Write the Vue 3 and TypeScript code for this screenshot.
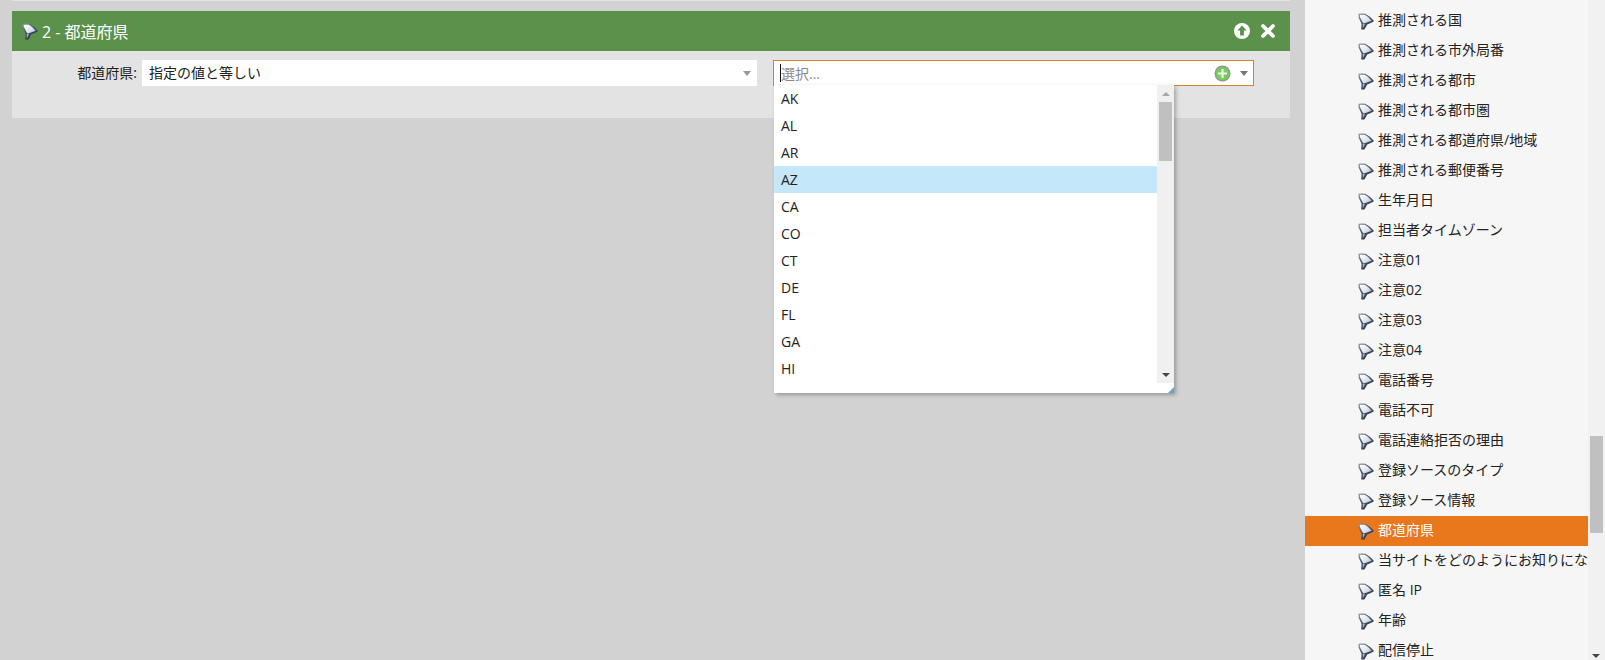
<script setup lang="ts">
const options: string[] = ['AK', 'AL', 'AR', 'AZ', 'CA', 'CO', 'CT', 'DE', 'FL', 'GA', 'HI']
const fields: string[] = [
  '推測される国', '推測される市外局番', '推測される都市', '推測される都市圏', '推測される都道府県/地域',
  '推測される郵便番号', '生年月日', '担当者タイムゾーン', '注意01', '注意02', '注意03', '注意04',
  '電話番号', '電話不可', '電話連絡拒否の理由', '登録ソースのタイプ', '登録ソース情報', '都道府県',
  '当サイトをどのようにお知りにな', '匿名 IP', '年齢', '配信停止'
]
</script>

<template>
  <div class="page">
    <svg width="0" height="0" class="defs">
      <defs>
        <linearGradient id="fg" x1="0" y1="0" x2="0.7" y2="1">
          <stop offset="0" stop-color="#8b96aa" />
          <stop offset="0.5" stop-color="#47536c" />
          <stop offset="1" stop-color="#252f42" />
        </linearGradient>
        <linearGradient id="fc" x1="0" y1="0" x2="1" y2="1">
          <stop offset="0" stop-color="#ffffff" />
          <stop offset="0.6" stop-color="#dfe3ea" />
          <stop offset="1" stop-color="#98a3b5" />
        </linearGradient>
        <symbol id="funnel" viewBox="0 0 16 17">
          <path d="M0.6 0.8 Q5 0 7.4 0.8 Q12 3.4 15.6 7.6 L15.6 8.6 Q12 10.6 9.2 11.6 L6.4 16.4 L3.2 16.6 L3.6 11 L0.6 4.6 Z" fill="url(#fg)" />
          <path d="M1.8 1.8 L6.8 1.8 Q10.8 4 13.8 7.8 L8.4 9.8 L5.4 10.4 L4.2 8.4 L1.8 3.8 Z" fill="url(#fc)" />
          <path d="M4.8 11 L7 11 L4.8 15.4 Z" fill="#aab3c2" />
        </symbol>
      </defs>
    </svg>
    <main class="canvas">
      <div class="prev-panel"></div>
      <section class="panel">
        <header class="panel-head">
          <div class="title">
            <svg class="funnel" width="16" height="17"><use href="#funnel" /></svg>
            <span>2 - 都道府県</span>
          </div>
          <div class="actions">
            <svg width="18" height="18" viewBox="0 0 18 18">
              <circle cx="9" cy="9" r="8" fill="#fff" />
              <path d="M9 3.6 L13.6 8.6 L10.9 8.6 L10.9 13.4 L7.1 13.4 L7.1 8.6 L4.4 8.6 Z" fill="#5c914c" />
            </svg>
            <svg width="16" height="16" viewBox="0 0 16 16">
              <path d="M3 3 L13 13 M13 3 L3 13" stroke="#fff" stroke-width="3.8" stroke-linecap="round" />
            </svg>
          </div>
        </header>
        <div class="panel-body">
          <label class="field-label">都道府県:</label>
          <div class="select">
            <span>指定の値と等しい</span>
            <i class="caret light"></i>
          </div>
          <div class="combo-wrap">
            <div class="combo">
              <span class="cursor"></span>
              <span class="placeholder">選択...</span>
              <svg class="plus" width="17" height="17" viewBox="0 0 17 17">
                <circle cx="8.5" cy="8.5" r="8" fill="#8d9a90" />
                <circle cx="8.5" cy="8.5" r="6.6" fill="#7ccb5e" />
                <path d="M8.5 4 V13 M4 8.5 H13" stroke="#e9fbe3" stroke-width="2.2" />
              </svg>
              <i class="caret"></i>
            </div>
            <div class="dropdown">
              <ul class="options">
                <li v-for="o in options" :key="o" :class="{ hover: o === 'AZ' }">{{ o }}</li>
              </ul>
              <div class="dd-scroll">
                <div class="arrow-btn"><i class="tri up"></i></div>
                <div class="dd-track"><div class="dd-thumb"></div></div>
                <div class="arrow-btn"><i class="tri down"></i></div>
              </div>
              <span class="resize"></span>
            </div>
          </div>
        </div>
      </section>
    </main>
    <aside class="sidebar">
      <ul class="tree">
        <li v-for="f in fields" :key="f" :class="{ active: f === '都道府県' }">
          <svg class="funnel" width="16" height="17"><use href="#funnel" /></svg>
          <span class="tree-text">{{ f }}</span>
        </li>
      </ul>
      <div class="side-scroll">
        <div class="side-thumb"></div>
        <i class="tri down side-arrow"></i>
      </div>
    </aside>
  </div>
</template>

<style>
html, body { margin: 0; padding: 0; overflow: hidden; background: #d2d2d2; }
</style>

<style scoped>
.page {
  display: flex;
  width: 1605px;
  height: 660px;
  overflow: hidden;
  background: #d2d2d2;
  font-family: "Open Sans", "Noto Sans CJK JP", sans-serif;
  font-size: 14px;
  color: #222;
}
.defs { position: absolute; }
.canvas { flex: 0 0 1305px; padding: 0 15px 0 12px; box-sizing: border-box; }
.prev-panel { height: 1px; margin-bottom: 10px; background: #e3e3e3; }
.panel { background: #e3e3e3; height: 107px; }
.panel-head {
  height: 40px;
  background: #5c914c;
  display: flex;
  align-items: center;
  justify-content: space-between;
  padding: 0 14px 0 10px;
  color: #fff;
  font-size: 16px;
}
.title { display: flex; align-items: center; gap: 4px; }
.actions { display: flex; align-items: center; gap: 9px; }
.panel-body { display: flex; align-items: flex-start; padding-top: 9px; }
.field-label { width: 125px; height: 26px; line-height: 25px; text-align: right; margin-right: 5px; white-space: nowrap; }
.select {
  width: 615px;
  height: 26px;
  background: #fff;
  display: flex;
  align-items: center;
  justify-content: space-between;
  padding: 0 6px 0 7px;
  box-sizing: border-box;
  margin-right: 16px;
  color: #222;
  line-height: 24px;
}
.caret {
  width: 0;
  height: 0;
  border-left: 4.5px solid transparent;
  border-right: 4.5px solid transparent;
  border-top: 5px solid #777;
}
.caret.light { border-top-color: #999; }
.combo-wrap { position: relative; width: 481px; }
.combo {
  height: 26px;
  box-sizing: border-box;
  border: 1px solid #d9822b;
  background: #fff;
  display: flex;
  align-items: center;
  padding: 0 5px 0 6px;
}
.cursor { width: 1px; height: 18px; background: #111; flex: none; }
.placeholder { color: #8a8a8a; flex: 1; margin-left: 0; }
.plus { margin-right: 9px; }
.dropdown {
  position: absolute;
  left: 1px;
  top: 25px;
  width: 400px;
  height: 308px;
  background: #fff;
  display: flex;
  box-shadow: 2px 2px 4px rgba(0, 0, 0, 0.28);
}
.options { list-style: none; margin: 0; padding: 0; flex: 1; }
.options li { height: 27px; line-height: 27px; padding-left: 7px; }
.options li.hover { background: #c4e7f9; }
.dd-scroll { width: 17px; height: 298px; background: #f0f0f0; display: flex; flex-direction: column; }
.arrow-btn { height: 17px; display: flex; align-items: center; justify-content: center; flex: none; }
.dd-track { flex: 1; }
.dd-thumb { width: 13px; height: 59px; margin: 0 auto; background: #c0c0c0; }
.tri { width: 0; height: 0; display: block; border-left: 4px solid transparent; border-right: 4px solid transparent; }
.tri.up { border-bottom: 4px solid #a6a6a6; }
.tri.down { border-top: 4px solid #444; }
.resize {
  position: absolute;
  right: 0;
  bottom: 0;
  width: 0;
  height: 0;
  border-left: 6px solid transparent;
  border-bottom: 6px solid #5fa6d0;
}
.sidebar { flex: 1; display: flex; background: #f6f6f7; }
.tree { list-style: none; margin: 0; padding: 6px 0 0; width: 283px; overflow: hidden; flex: none; }
.tree li {
  height: 30px;
  display: flex;
  align-items: center;
  padding-left: 53px;
  box-sizing: border-box;
  gap: 4px;
  white-space: nowrap;
  line-height: 28px;
}
.tree-text { flex: 1; height: 30px; }
.tree li.active { background: #e8781b; color: #fff; }
.side-scroll { flex: 1; position: relative; background: #f1f1f1; }
.side-thumb { position: absolute; left: 2px; top: 436px; width: 13px; height: 97px; background: #c0c0c0; }
.side-arrow { position: absolute; left: 4px; top: 654px; }
</style>
